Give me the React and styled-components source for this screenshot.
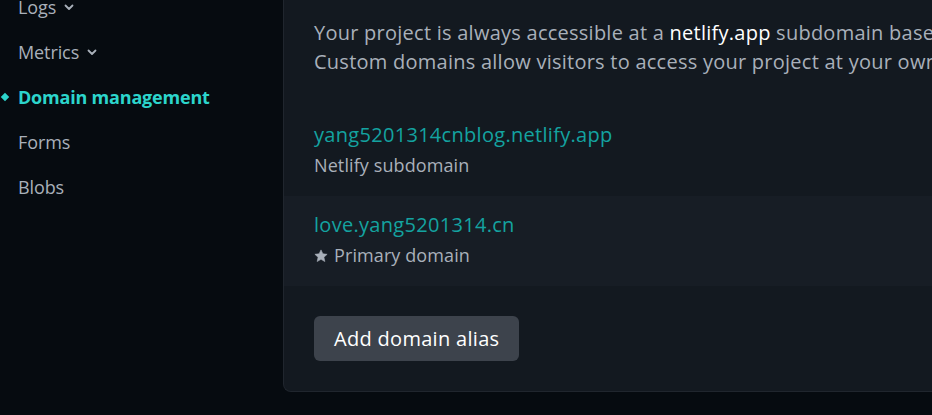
import React from "react";
import styled, { createGlobalStyle } from "styled-components";

const Global = createGlobalStyle`
  html, body { margin: 0; padding: 0; background: #060b10; }
  body { font-family: "Open Sans", "Noto Sans", sans-serif; overflow: hidden; }
`;

const Page = styled.div`
  display: flex;
  align-items: flex-start;
  width: 932px;
  height: 415px;
  overflow: hidden;
  background: #060b10;
`;

const Sidebar = styled.nav`
  width: 283px;
  flex: none;
  display: flex;
  flex-direction: column;
  margin-top: -16px;
`;

const NavItem = styled.div`
  position: relative;
  height: 45px;
  display: flex;
  align-items: center;
  gap: 8px;
  padding-left: 18px;
  font-size: 18px;
  font-weight: ${(p) => (p.$active ? 700 : 400)};
  color: ${(p) => (p.$active ? "#2cd5cc" : "#a9b0ba")};
  letter-spacing: ${(p) => (p.$active ? "-0.2px" : "-0.1px")};
`;

const Diamond = styled.span`
  position: absolute;
  left: 2px;
  top: 50%;
  width: 6px;
  height: 6px;
  margin-top: -3px;
  background: #2cd5cc;
  transform: rotate(45deg);
`;

const Chevron = () => (
  <svg width="10" height="7" viewBox="0 0 10 7" style={{ marginTop: 2 }}>
    <path d="M1.5 1.5 L5 5 L8.5 1.5" fill="none" stroke="#a9b0ba" strokeWidth="1.8" strokeLinecap="round" strokeLinejoin="round" />
  </svg>
);

const Card = styled.section`
  flex: 1;
  margin-top: -40px;
  background: #131920;
  border: 1px solid #20262e;
  border-right: none;
  border-radius: 0 0 0 8px;
  display: flex;
  flex-direction: column;
  overflow: hidden;
`;

const Intro = styled.div`
  padding: 57px 0 0 30px;
  height: 145px;
  box-sizing: border-box;
  font-size: 20px;
  line-height: 29px;
  color: #a9b0ba;
  white-space: nowrap;
  letter-spacing: 0.25px;
  & strong { color: #ffffff; font-weight: 400; }
`;

const DomainRow = styled.div`
  height: 90px;
  box-sizing: border-box;
  padding: 14px 0 0 30px;
  background: ${(p) => (p.$highlight ? "#171d25" : "transparent")};
  display: flex;
  flex-direction: column;
`;

const DomainLink = styled.a`
  font-size: 20px;
  line-height: 30px;
  color: #14a3a0;
  text-decoration: none;
  letter-spacing: 0.3px;
`;

const DomainMeta = styled.div`
  display: flex;
  align-items: center;
  gap: 6px;
  font-size: 18px;
  line-height: 31px;
  color: #a9b0ba;
  letter-spacing: 0.1px;
`;

const Footer = styled.div`
  padding: 30px 0 30px 30px;
`;

const Button = styled.button`
  height: 45px;
  padding: 0 20px;
  border: none;
  border-radius: 6px;
  background: #3d434c;
  color: #ffffff;
  font-family: inherit;
  font-size: 20px;
  letter-spacing: 0.3px;
  cursor: pointer;
`;

const Star = () => (
  <svg width="14" height="14" viewBox="0 0 24 24">
    <path d="M12 1.5 L15.2 8.3 L22.5 9.1 L17 14.1 L18.6 21.5 L12 17.7 L5.4 21.5 L7 14.1 L1.5 9.1 L8.8 8.3 Z" fill="#a9b0ba" strokeLinejoin="round" stroke="#a9b0ba" strokeWidth="1" />
  </svg>
);

export default function App() {
  return (
    <>
      <Global />
      <Page>
        <Sidebar>
          <NavItem>Logs <Chevron /></NavItem>
          <NavItem>Metrics <Chevron /></NavItem>
          <NavItem $active><Diamond />Domain management</NavItem>
          <NavItem>Forms</NavItem>
          <NavItem>Blobs</NavItem>
        </Sidebar>
        <Card>
          <Intro>
            Your project is always accessible at a <strong>netlify.app</strong> subdomain based on your project name.
            <br />
            Custom domains allow visitors to access your project at your own domains.
          </Intro>
          <DomainRow>
            <DomainLink href="#">yang5201314cnblog.netlify.app</DomainLink>
            <DomainMeta>Netlify subdomain</DomainMeta>
          </DomainRow>
          <DomainRow $highlight>
            <DomainLink href="#">love.yang5201314.cn</DomainLink>
            <DomainMeta><Star />Primary domain</DomainMeta>
          </DomainRow>
          <Footer>
            <Button>Add domain alias</Button>
          </Footer>
        </Card>
      </Page>
    </>
  );
}
